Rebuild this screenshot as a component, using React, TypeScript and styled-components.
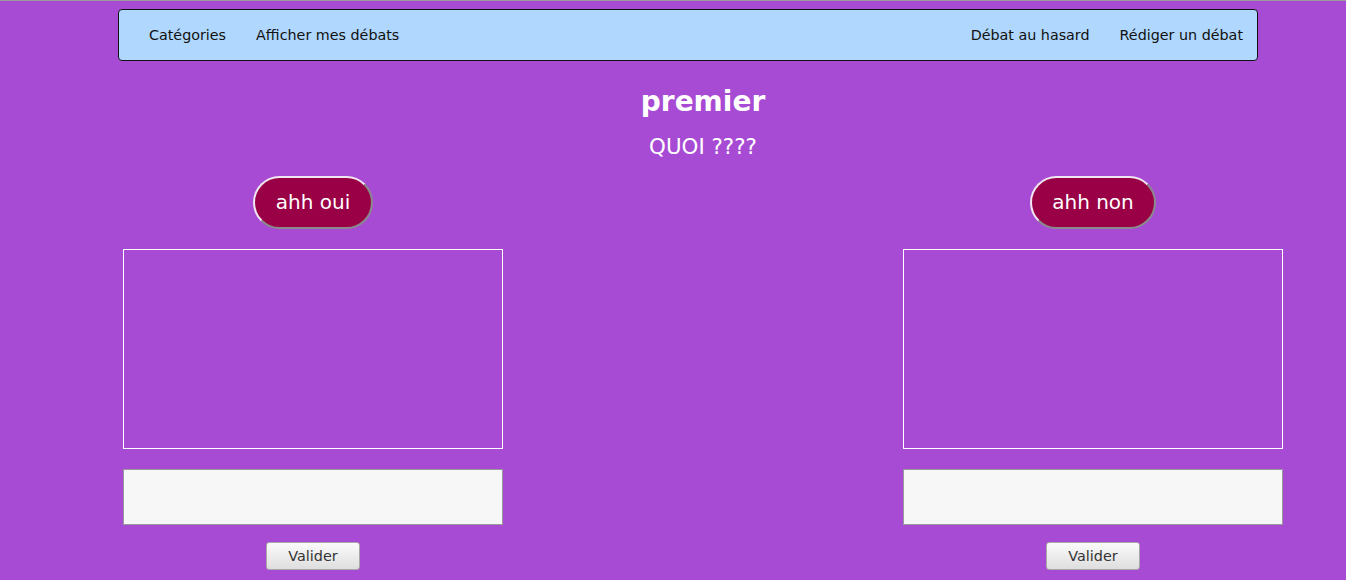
import React from "react";
import styled, { createGlobalStyle } from "styled-components";

const Global = createGlobalStyle`
  html, body { margin: 0; padding: 0; }
  body {
    background: #a84bd4;
    font-family: "DejaVu Sans", sans-serif;
    border-top: 1px solid #9a9a9a;
    min-height: 579px;
    overflow: hidden;
  }
`;

const Page = styled.div`
  padding-top: 8px;
`;

const Nav = styled.nav`
  box-sizing: border-box;
  margin-left: 118px;
  width: 1140px;
  height: 52px;
  background: #b0d8fe;
  border: 1px solid #111;
  border-radius: 4px;
  display: flex;
  align-items: center;
  justify-content: space-between;
  padding: 0 14px 0 30px;
`;

const NavGroup = styled.div`
  display: flex;
  gap: 30px;
`;

const NavLink = styled.a`
  font-size: 14.3px;
  color: #111;
  text-decoration: none;
`;

const Main = styled.main`
  margin-left: 123px;
  width: 1160px;
  display: flex;
  flex-direction: column;
  align-items: center;
`;

const Title = styled.h1`
  margin: 23px 0 0;
  font-size: 28px;
  line-height: 36px;
  font-weight: bold;
  color: #fff;
`;

const Question = styled.p`
  margin: 14px 0 0;
  font-size: 21.4px;
  line-height: 26px;
  color: #fff;
`;

const Columns = styled.div`
  margin-top: 16px;
  width: 100%;
  display: grid;
  grid-template-columns: 380px 380px;
  justify-content: space-between;
`;

const Column = styled.div`
  display: flex;
  flex-direction: column;
  align-items: center;
`;

const Pill = styled.button`
  box-sizing: border-box;
  height: 53px;
  padding: 0 20.5px 1px;
  border-radius: 27px;
  background: #990045;
  color: #fff;
  font-family: "DejaVu Sans", sans-serif;
  font-size: 20px;
  border: 2px solid;
  border-color: #f0e8f0 #8a8a8a #8a8a8a #f0e8f0;
`;

const ArgBox = styled.div`
  box-sizing: border-box;
  margin-top: 20px;
  width: 380px;
  height: 200px;
  border: 1px solid #fff;
`;

const Field = styled.textarea`
  box-sizing: border-box;
  margin-top: 20px;
  width: 380px;
  height: 56px;
  background: #f7f7f7;
  border: 1px solid #999;
  resize: none;
  display: block;
`;

const Submit = styled.button`
  box-sizing: border-box;
  margin-top: 17px;
  width: 94px;
  height: 28px;
  font-family: "DejaVu Sans", sans-serif;
  font-size: 14.4px;
  color: #333;
  background: linear-gradient(#fbfbfb, #dedede);
  border: 1px solid #a8a8a8;
  border-radius: 3px;
`;

const sides = ["ahh oui", "ahh non"];

export default function App() {
  return (
    <Page>
      <Global />
      <Nav>
        <NavGroup>
          <NavLink href="#">Catégories</NavLink>
          <NavLink href="#">Afficher mes débats</NavLink>
        </NavGroup>
        <NavGroup>
          <NavLink href="#">Débat au hasard</NavLink>
          <NavLink href="#">Rédiger un débat</NavLink>
        </NavGroup>
      </Nav>
      <Main>
        <Title>premier</Title>
        <Question>QUOI ????</Question>
        <Columns>
          {sides.map((s) => (
            <Column key={s}>
              <Pill>{s}</Pill>
              <ArgBox />
              <Field />
              <Submit>Valider</Submit>
            </Column>
          ))}
        </Columns>
      </Main>
    </Page>
  );
}
